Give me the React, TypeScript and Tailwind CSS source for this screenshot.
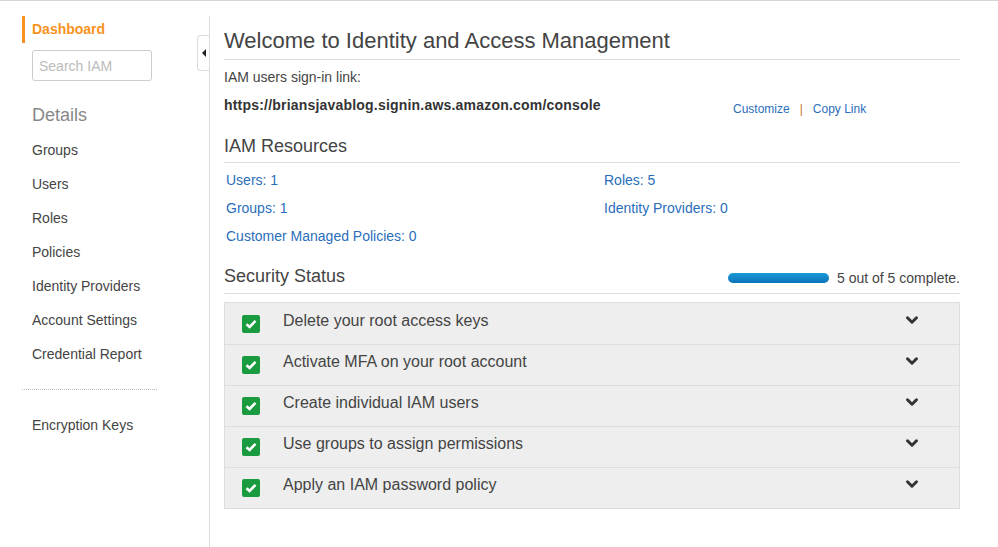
import { ChevronDown } from "lucide-react";

const navItems = [
  "Groups",
  "Users",
  "Roles",
  "Policies",
  "Identity Providers",
  "Account Settings",
  "Credential Report",
];

const checks = [
  "Delete your root access keys",
  "Activate MFA on your root account",
  "Create individual IAM users",
  "Use groups to assign permissions",
  "Apply an IAM password policy",
];

function CheckBox() {
  return (
    <div className="w-[18px] h-[18px] rounded-[2px] bg-[#1a9b3f] flex items-center justify-center">
      <svg width="12" height="10" viewBox="0 0 12 10">
        <path d="M1.5 5.2 L4.6 8 L10.5 1.8" fill="none" stroke="white" strokeWidth="2.6" />
      </svg>
    </div>
  );
}

export default function App() {
  return (
    <div
      className="w-[998px] h-[547px] bg-white border-t border-[#d5d5d5] flex text-[#444]"
      style={{ fontFamily: '"Liberation Sans", Arial, sans-serif' }}
    >
      {/* sidebar */}
      <div className="w-[209px] pt-[15px] flex">
        <div className="w-[197px] pl-[22px]">
          <div className="border-l-[3px] border-[#f7931e] pl-[7px] h-[27px] flex items-center">
            <span className="text-[14px] font-bold text-[#f7931e]">Dashboard</span>
          </div>
          <div className="pl-[10px] mt-[7px]">
            <input
              placeholder="Search IAM"
              className="w-[120px] h-[31px] border border-[#ccc] rounded-[3px] px-[6px] text-[14px] placeholder:text-[#bbb] bg-white"
            />
          </div>
          <div className="pl-[10px] mt-[21px] text-[18px] text-[#888]">Details</div>
          <div className="pl-[10px] mt-[13px] flex flex-col gap-[17px]">
            {navItems.map((n) => (
              <div key={n} className="text-[14px] leading-[17px] text-[#444]">
                {n}
              </div>
            ))}
          </div>
          <div className="w-[135px] border-t border-dotted border-[#bbb] mt-[26px]" />
          <div className="pl-[10px] mt-[25px] text-[14px] text-[#444]">Encryption Keys</div>
        </div>
        <div className="pt-[19px]">
          <div className="w-[12px] h-[36px] border border-r-0 border-[#ddd] rounded-l-[4px] flex items-center justify-center bg-white">
            <div className="w-0 h-0 border-y-[4px] border-y-transparent border-r-[4px] border-r-[#222]" />
          </div>
        </div>
      </div>
      <div className="w-px bg-[#ddd] mt-[15px]" />

      {/* main */}
      <div className="pl-[14px] pt-[26px] w-[750px]">
        <h1 className="text-[22px] leading-[28px] text-[#444] pb-[4px] border-b border-[#ddd]">
          Welcome to Identity and Access Management
        </h1>
        <div className="text-[14px] leading-[16px] mt-[9px]">IAM users sign-in link:</div>
        <div className="flex items-start mt-[12px]">
          <span className="text-[14px] leading-[16px] font-bold tracking-[0.2px] text-[#333] w-[509px]">
            https://briansjavablog.signin.aws.amazon.com/console
          </span>
          <span className="text-[12px] leading-[14px] pt-[5px] text-[#2a6ebb]">Customize</span>
          <span className="text-[12px] leading-[14px] pt-[5px] text-[#c8722a] mx-[10px]">|</span>
          <span className="text-[12px] leading-[14px] pt-[5px] text-[#2a6ebb]">Copy Link</span>
        </div>

        <h2 className="text-[18px] leading-[22px] mt-[19px] pb-[5px] border-b border-[#ddd]">
          IAM Resources
        </h2>
        <div className="grid grid-cols-[378px_1fr] gap-y-[11px] mt-[9px] pl-[2px] text-[14px] leading-[17px] text-[#2a6ebb]">
          <span>Users: 1</span>
          <span>Roles: 5</span>
          <span>Groups: 1</span>
          <span>Identity Providers: 0</span>
          <span>Customer Managed Policies: 0</span>
        </div>

        <div className="flex items-end justify-between mt-[20px] pb-[6px] border-b border-[#ddd]">
          <h2 className="text-[18px] leading-[22px]">Security Status</h2>
          <div className="flex items-center mb-[1px]">
            <div className="w-[101px] h-[10px] rounded-full bg-gradient-to-b from-[#1b9ad8] to-[#0b74b8]" />
            <span className="text-[14px] leading-[16px] ml-[8px]">5 out of 5 complete.</span>
          </div>
        </div>

        <div className="mt-[8px] border border-[#ddd] bg-[#eee]">
          {checks.map((c, i) => (
            <div
              key={c}
              className={`h-[41px] flex items-center pl-[17px] pr-[38px] ${i > 0 ? "border-t border-[#ddd]" : ""}`}
            >
              <CheckBox />
              <span className="text-[16px] ml-[23px] flex-1 -mt-[6px]">{c}</span>
              <ChevronDown size={18} strokeWidth={4} className="text-[#333] -mt-[8px]" />
            </div>
          ))}
        </div>
      </div>
    </div>
  );
}
